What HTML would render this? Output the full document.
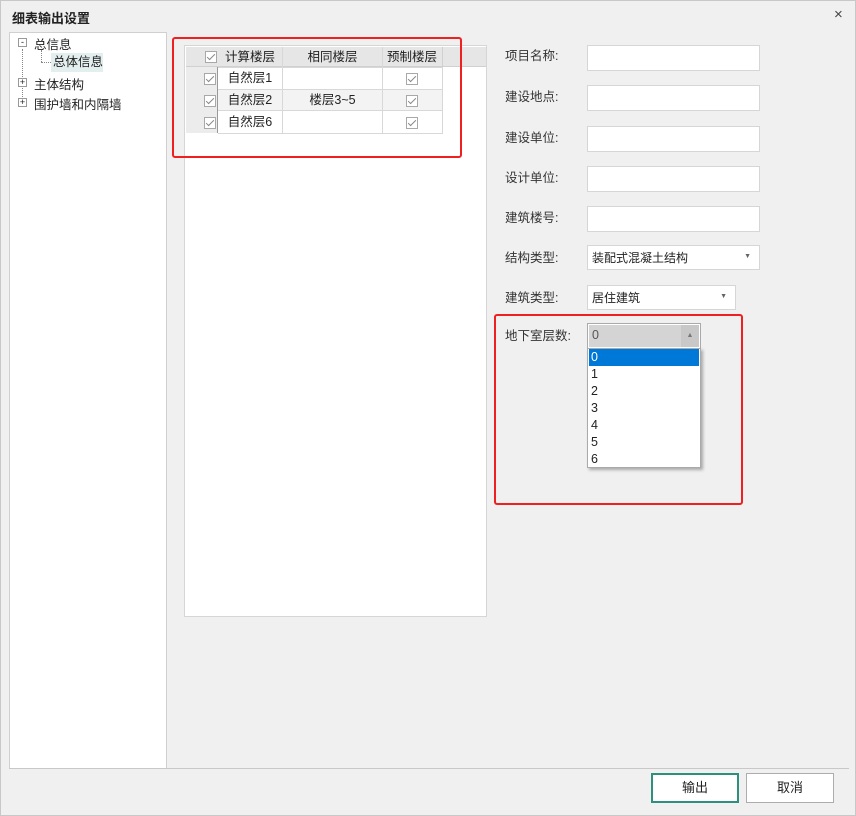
<!DOCTYPE html>
<html><head><meta charset="utf-8"><style>
*{box-sizing:border-box;margin:0;padding:0}
body{width:856px;height:816px;background:#f0f0f0;font-family:"Liberation Sans","Noto Sans CJK SC",sans-serif;font-size:12px;color:#222;position:relative;overflow:hidden}
.a{position:absolute;white-space:nowrap}
.win{left:0;top:0;width:856px;height:816px;border:1px solid #c8c8c8}
.cb{position:absolute;width:12px;height:12px;border:1px solid #a8a8a8;background:#fff}
.cb:after{content:"";position:absolute;left:3px;top:0px;width:3px;height:7px;border:solid #888;border-width:0 1.5px 1.5px 0;transform:rotate(45deg)}
.inp{position:absolute;left:587px;width:173px;height:26px;background:#fff;border:1px solid #d6d6d6;white-space:nowrap}
.lbl{position:absolute;left:505px;font-size:12.5px;color:#333}
.cell{position:absolute;text-align:center;line-height:22px;font-size:12.5px}
.item{position:absolute;left:589px;width:110px;height:17px;line-height:17px;padding-left:2px;font-size:12.5px}
.btn{position:absolute;top:773px;width:88px;height:30px;background:#fff;text-align:center;line-height:26px;font-size:13px}
.tr{position:absolute;font-size:12.5px;white-space:nowrap}
</style></head><body>
<div class="a win"></div>
<div class="a" style="left:12px;top:8px;font-size:13px;font-weight:bold;color:#222">细表输出设置</div>
<div class="a" style="left:834px;top:6px;font-size:15px;color:#444">×</div>
<!-- left tree -->
<div class="a" style="left:9px;top:32px;width:158px;height:737px;background:#fff;border:1px solid #d0d0d0"></div>
<div class="a" style="left:22px;top:49px;height:56px;border-left:1px dotted #888"></div>
<div class="a" style="left:41px;top:50px;height:12px;border-left:1px dotted #888"></div>
<div class="a" style="left:41px;top:62px;width:10px;border-top:1px dotted #888"></div>
<div class="a" style="left:18px;top:38px;width:9px;height:9px;border:1px solid #999;background:#fff;font-size:9px;line-height:7px;text-align:center">-</div>
<div class="a" style="left:18px;top:78px;width:9px;height:9px;border:1px solid #999;background:#fff;font-size:9px;line-height:7px;text-align:center">+</div>
<div class="a" style="left:18px;top:98px;width:9px;height:9px;border:1px solid #999;background:#fff;font-size:9px;line-height:7px;text-align:center">+</div>
<div class="tr" style="left:34px;top:34px">总信息</div>
<div class="tr" style="left:51px;top:53px;width:52px;height:19px;background:#e3efef;padding-left:2px;line-height:18px">总体信息</div>
<div class="tr" style="left:34px;top:74px">主体结构</div>
<div class="tr" style="left:34px;top:94px">围护墙和内隔墙</div>
<!-- grid panel -->
<div class="a" style="left:184px;top:45px;width:303px;height:572px;background:#fff;border:1px solid #d6d6d6"></div>
<div class="a" style="left:186px;top:47px;width:300px;height:20px;background:#e6e6e6;border-bottom:1px solid #d0d0d0"></div>
<div class="a" style="left:186px;top:67px;width:32px;height:66px;background:#ececec;border-right:1px solid #999"></div>
<div class="a" style="left:218px;top:89px;width:224px;height:22px;background:#f3f3f3"></div>
<div class="a" style="left:218px;top:67px;width:225px;height:67px;border:1px solid #d8d8d8;border-left:none"></div>
<div class="a" style="left:218px;top:89px;width:225px;height:22px;border-top:1px solid #d8d8d8;border-bottom:1px solid #d8d8d8"></div>
<div class="a" style="left:282px;top:47px;height:87px;border-left:1px solid #d8d8d8"></div>
<div class="a" style="left:382px;top:47px;height:87px;border-left:1px solid #d8d8d8"></div>
<div class="a" style="left:442px;top:47px;height:20px;border-left:1px solid #d0d0d0"></div>
<div class="cb" style="left:205px;top:51px"></div>
<div class="cell" style="left:218px;top:46px;width:64px">计算楼层</div>
<div class="cell" style="left:283px;top:46px;width:99px">相同楼层</div>
<div class="cell" style="left:382px;top:46px;width:60px">预制楼层</div>
<div class="cb" style="left:204px;top:73px"></div>
<div class="cb" style="left:204px;top:95px"></div>
<div class="cb" style="left:204px;top:117px"></div>
<div class="cell" style="left:218px;top:67px;width:64px">自然层1</div>
<div class="cell" style="left:218px;top:89px;width:64px">自然层2</div>
<div class="cell" style="left:218px;top:111px;width:64px">自然层6</div>
<div class="cell" style="left:283px;top:89px;width:99px">楼层3~5</div>
<div class="cb" style="left:406px;top:73px"></div>
<div class="cb" style="left:406px;top:95px"></div>
<div class="cb" style="left:406px;top:117px"></div>
<div class="a" style="left:172px;top:37px;width:290px;height:121px;border:2.5px solid #f02020;border-radius:3px"></div>
<!-- right form -->
<div class="lbl" style="top:45px">项目名称:</div><div class="inp" style="top:45px"></div>
<div class="lbl" style="top:86px">建设地点:</div><div class="inp" style="top:85px"></div>
<div class="lbl" style="top:127px">建设单位:</div><div class="inp" style="top:126px"></div>
<div class="lbl" style="top:167px">设计单位:</div><div class="inp" style="top:166px"></div>
<div class="lbl" style="top:207px">建筑楼号:</div><div class="inp" style="top:206px"></div>
<div class="lbl" style="top:247px">结构类型:</div><div class="inp" style="top:245px;height:25px;padding:3px 4px;font-size:12px">装配式混凝土结构<span style="position:absolute;right:8px;top:7px;font-size:7px;color:#666">▼</span></div>
<div class="lbl" style="top:287px">建筑类型:</div><div class="inp" style="top:285px;width:149px;height:25px;padding:3px 4px;font-size:12px">居住建筑<span style="position:absolute;right:8px;top:7px;font-size:7px;color:#666">▼</span></div>
<div class="lbl" style="top:325px">地下室层数:</div>
<div class="a" style="left:587px;top:323px;width:114px;height:26px;background:#d4d4d4;border:1px solid #aaa;outline:1px solid #fff;outline-offset:-2px;padding:4px 4px;font-size:12.5px;color:#555">0<span style="position:absolute;right:1px;top:1px;width:18px;height:22px;background:#c8c8c8;font-size:7px;text-align:center;line-height:22px;color:#777">▲</span></div>
<div class="a" style="left:587px;top:348px;width:114px;height:120px;background:#fff;border:1px solid #aaa;box-shadow:2px 2px 3px rgba(0,0,0,.3)"></div>
<div class="item" style="top:349px;background:#0078d7;color:#fff">0</div>
<div class="item" style="top:366px">1</div>
<div class="item" style="top:383px">2</div>
<div class="item" style="top:400px">3</div>
<div class="item" style="top:417px">4</div>
<div class="item" style="top:434px">5</div>
<div class="item" style="top:451px">6</div>
<div class="a" style="left:494px;top:314px;width:249px;height:191px;border:2.5px solid #f02020;border-radius:3px"></div>
<!-- bottom -->
<div class="a" style="left:9px;top:768px;width:840px;border-top:1px solid #c8c8c8"></div>
<div class="btn" style="left:651px;border:2px solid #2e8f7d">输出</div>
<div class="btn" style="left:746px;border:1px solid #adadad;line-height:28px">取消</div>
</body></html>
